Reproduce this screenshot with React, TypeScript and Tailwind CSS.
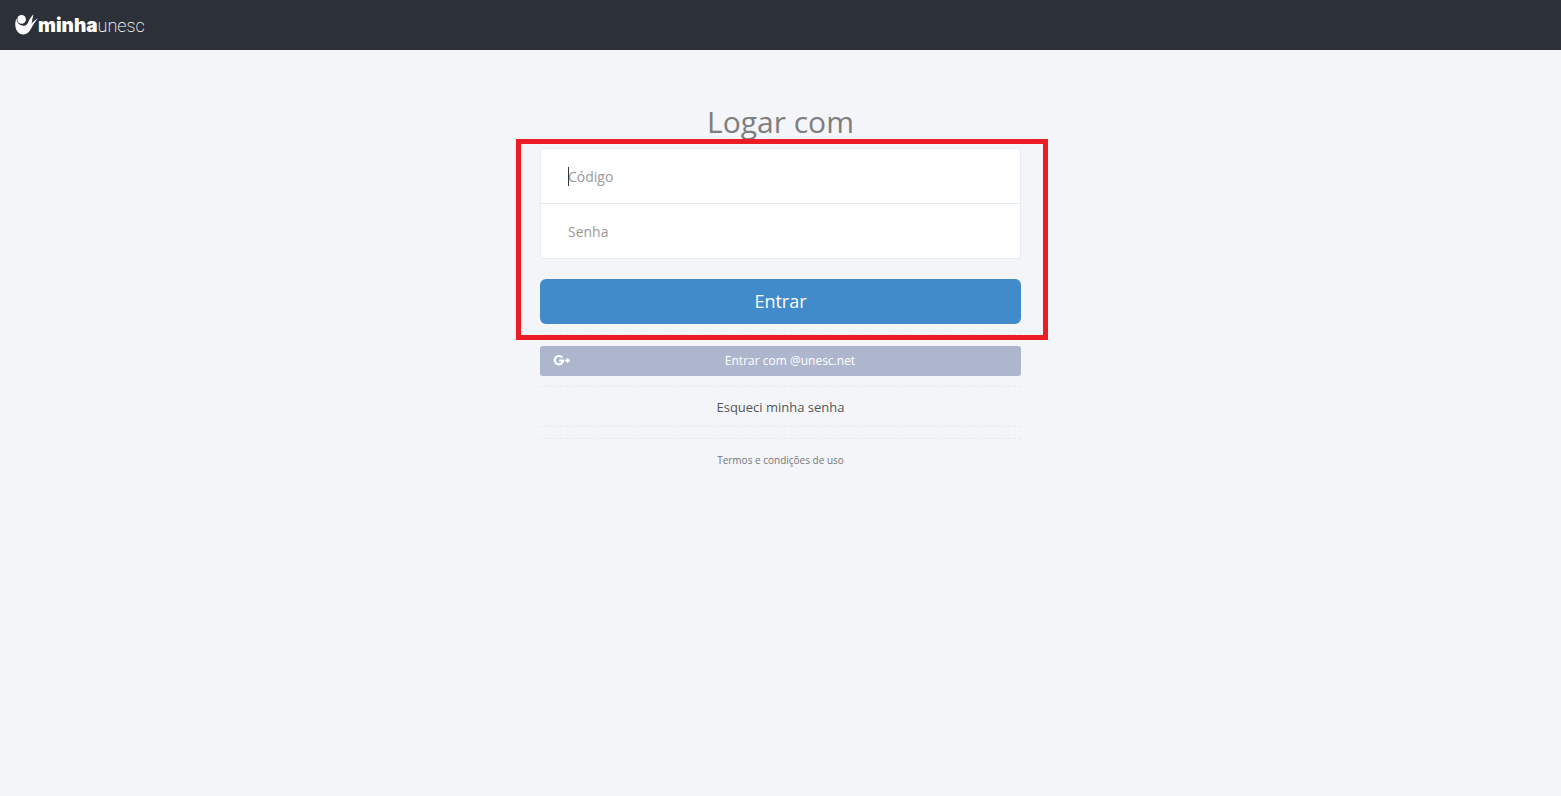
import React, { useState } from "react";

function Logo() {
  return (
    <a href="#" aria-label="minhaunesc" className="flex items-center text-white">
      <svg width="23" height="22" viewBox="0 0 23 22" fill="currentColor" aria-hidden="true">
        <circle cx="6.6" cy="5.4" r="4.3" />
        <path d="M1.6 4.6C-.6 8.600 0 14.500 2.400 17.500C4.600 20.600 8.600 21.400 11.800 19.600C14.600 18 15.400 15.600 17.200 12.600C18.800 9.800 21 6.600 22.900 4.200C20.300 5.600 18.200 7.600 16.600 9.800C17 6.400 17.700 3.200 18.500 .2C15.600 3.200 13.800 6.400 12.600 9.400C11.200 11.600 8.600 12.200 6 11.200C3.400 10.200 1.400 7.800 1.600 4.600Z" />
      </svg>
      <span className="flex items-baseline pt-px">
        <span className="font-['Inter',sans-serif] text-[19px] font-black leading-6">minha</span>
        <span className="font-['Roboto',sans-serif] text-lg font-extralight leading-6">unesc</span>
      </span>
    </a>
  );
}

function GooglePlusIcon() {
  return (
    <svg width="18" height="12" viewBox="0 0 18 12" fill="none" stroke="currentColor" aria-hidden="true">
      <path d="M9.300 2.700A4.200 4.200 0 1 0 10.100 5.700H6.200" strokeWidth="2.200" />
      <path d="M14.500 3.200V7.800M12.200 5.500H16.800" strokeWidth="1.800" />
    </svg>
  );
}

function LoginForm() {
  const [codigo, setCodigo] = useState("");
  const [senha, setSenha] = useState("");

  const handleSubmit = (e: React.FormEvent<HTMLFormElement>) => {
    e.preventDefault();
  };

  return (
    <form onSubmit={handleSubmit} className="relative">
      <div className="divide-y divide-[#e7ecf3] rounded border border-[#e7ecf3] bg-white text-sm">
        <div className="relative">
          <input
            id="codigo"
            type="text"
            aria-label="Código"
            placeholder="Código"
            value={codigo}
            onChange={(e) => setCodigo(e.target.value)}
            className="block h-[54px] w-full px-[27px] outline-none placeholder:text-[#999]"
          />
          {codigo === "" && (
            <span className="pointer-events-none absolute left-[27px] top-[18px] h-[19px] w-px bg-[#333]" />
          )}
        </div>
        <input
          id="senha"
          type="password"
          aria-label="Senha"
          placeholder="Senha"
          value={senha}
          onChange={(e) => setSenha(e.target.value)}
          className="block h-[54px] w-full px-[27px] outline-none placeholder:text-[#999]"
        />
      </div>
      <button
        type="submit"
        className="mt-5 block h-[45px] w-full rounded-md bg-[#428bca] pb-0.5 text-lg text-white"
      >
        Entrar
      </button>
      <div className="pointer-events-none absolute -bottom-4 -left-6 -right-[27px] -top-[9px] border-5 border-[#ed1c24]" />
    </form>
  );
}

function Line() {
  return <div className="border-t border-dashed border-[#e7e9ee]" />;
}

export default function App() {
  return (
    <div className="min-h-screen bg-[#f3f5f9] font-['Open_Sans',sans-serif] text-[#555]">
      <header className="flex h-[50px] items-center bg-[#2b3039] px-[15px]">
        <Logo />
      </header>
      <main className="mx-auto max-w-[481px] pt-[55px] text-center">
        <h1 className="mb-[10px] text-3xl leading-[33px] text-[#7e7e7e]">Logar com</h1>
        <LoginForm />
        <div className="mt-[10px]">
          <Line />
        </div>
        <button
          type="button"
          className="mb-[10px] mt-[11px] flex h-[30px] w-full items-center rounded-[3px] bg-[#aeb6cd] pl-[13px] pr-3 text-xs text-white"
        >
          <span className="shrink-0">
            <GooglePlusIcon />
          </span>
          <span className="grow">Entrar com @unesc.net</span>
        </button>
        <Line />
        <a href="#" className="block pb-[9px] pt-[11px] text-[13px] leading-[19px] text-[#555]">
          Esqueci minha senha
        </a>
        <Line />
        <div className="mt-[11px]">
          <Line />
        </div>
        <a href="#" className="mt-[14px] block text-[10px] leading-[14px] text-[#777]">
          Termos e condições de uso
        </a>
      </main>
    </div>
  );
}
